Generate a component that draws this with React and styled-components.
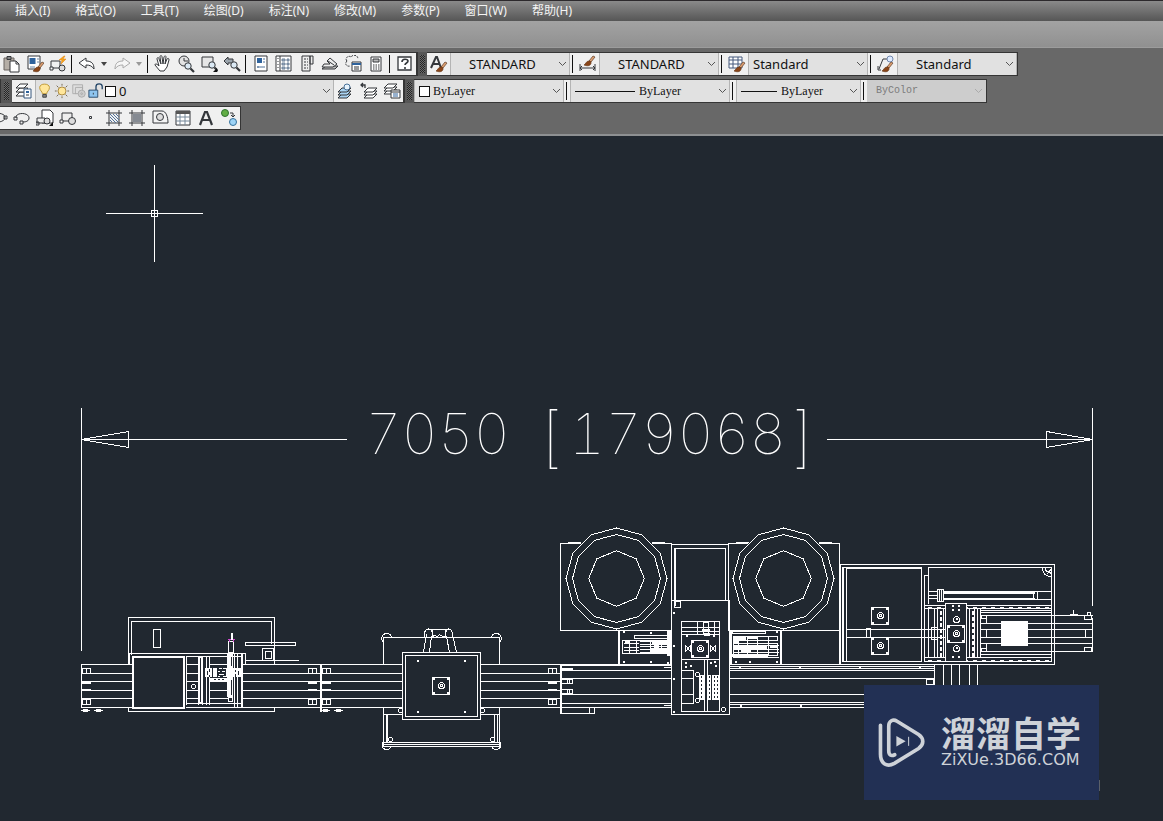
import React from 'react';
import styled, { createGlobalStyle } from 'styled-components';

const Global = createGlobalStyle`
  *, *::before, *::after { box-sizing: border-box; }
  body { margin: 0; background: #212830; }
  button, select { font: inherit; color: inherit; margin: 0; padding: 0; border: 0; background: none; }
`;

const sans = '"Noto Sans", "Noto Sans CJK SC", sans-serif';
const serif = '"Liberation Serif", "Noto Sans CJK SC", serif';
const mono = '"Liberation Mono", "Noto Sans CJK SC", monospace';

const Window = styled.div`
  display: flex;
  flex-direction: column;
  min-height: 100vh;
  font-family: ${sans};
  overflow: hidden;
`;

const MenuBar = styled.nav`
  display: flex;
  gap: 1px;
  height: 21px;
  padding-left: 3px;
  border-top: 1px solid #2c292c;
  background: linear-gradient(#8a8a8a, #565656);
`;

const MenuItem = styled.button`
  padding: 0 12px;
  font-size: 12px;
  line-height: 20px;
  color: #f4f4f4;
  white-space: nowrap;
`;

const Ribbon = styled.div`
  height: 27px;
  background: linear-gradient(#a3a3a3, #909090);
  border-bottom: 1px solid #9c9c9c;
`;

const Dock = styled.div`
  display: flex;
  flex-direction: column;
  align-items: flex-start;
  gap: 3px;
  padding: 4px 0;
  background: #686868;
  border-bottom: 2px solid #8e9092;
`;

const DockRow = styled.div`
  display: flex;
`;

const Toolbar = styled.div`
  display: flex;
  height: 24px;
  margin-left: ${(p) => (p.$scrolled ? '-13px' : '0')};
  background: #f0f0f0;
  border: solid #353535;
  border-width: 1px 1px 1px 0;
`;

const Grip = styled.span`
  flex: none;
  width: ${(p) => (p.$wide ? '12px' : '10px')};
  padding: 3px 2px;
  background: #575757;
  border-left: 1px solid #353535;
  &::before {
    content: '';
    display: block;
    width: 5px;
    height: 100%;
    margin: 0 auto;
    background: repeating-conic-gradient(#262626 0 25%, #6c6c6c 0 50%) 0 0 / 2px 2px;
  }
`;

const Tool = styled.button`
  flex: none;
  display: grid;
  place-items: center;
  width: ${(p) => (p.$narrow ? '12px' : '23px')};
  height: 22px;
`;

const Separator = styled.span`
  flex: none;
  width: 6px;
  padding: 2px;
  &::before {
    content: '';
    display: block;
    width: 1px;
    height: 18px;
    background: #111;
  }
`;

const Combo = styled.label`
  position: relative;
  flex: none;
  display: flex;
  align-items: center;
  gap: 1px;
  width: ${(p) => p.$width}px;
  height: 22px;
  padding-left: ${(p) => p.$indent}px;
  background: ${(p) => (p.$off ? '#cdcdcd' : '#e1e1e1')};
  border: solid ${(p) => (p.$off ? '#cdcdcd' : '#b4b4b4')};
  border-width: 0 1px;
  color: ${(p) => (p.$off ? '#7c7c7c' : '#111')};
`;

const Choice = styled.select`
  flex: 1;
  min-width: 0;
  height: 22px;
  appearance: none;
  opacity: 1;
  font-family: ${(p) => p.$face};
  font-size: ${(p) => p.$size}px;
  line-height: 22px;
`;

const Chevron = styled.svg`
  position: absolute;
  right: 2px;
  top: 8px;
  pointer-events: none;
`;

const Swatch = styled.span`
  flex: none;
  width: 11px;
  height: 11px;
  margin-right: 2px;
  background: #fff;
  border: 1px solid #111;
`;

const LineSample = styled.span`
  flex: none;
  width: ${(p) => p.$length}px;
  height: 1px;
  margin-right: 3px;
  background: #111;
`;

const Canvas = styled.main`
  position: relative;
  flex: 1;
  background: #212830;
`;

const Drawing = styled.svg`
  display: block;
  width: 100%;
  height: auto;
`;

const Badge = styled.aside`
  position: absolute;
  right: 64px;
  bottom: 21px;
  display: flex;
  align-items: center;
  gap: 14px;
  width: 235px;
  height: 115px;
  padding-left: 13px;
  background: #223054;
  color: #ced2d8;
`;

const BadgeText = styled.div`
  display: flex;
  flex-direction: column;
  gap: 1px;
  white-space: nowrap;
`;

const BadgeName = styled.strong`
  font: 700 35px/34px "Noto Sans CJK SC", sans-serif;
`;

const BadgeSite = styled.span`
  font: 400 16px/20px "DejaVu Sans", sans-serif;
`;

const ink = '#34373b';
const Brush = ({ x = 0, y = 0 }) => (
  <g transform={`translate(${x} ${y})`}>
    <path d="M9 0 5 5 7 6 11 1z" fill="#e0a070" stroke="#6b4a35" strokeWidth=".8" />
    <path d="M0 9C2 8 2 5 5 5c2 0 3 2 1 4-1 1-4 1-6 0z" fill="#8a4519" stroke="#5f300f" strokeWidth=".6" />
  </g>
);
const Sheets = ({ x = 0, y = 0, fill = '#fff' }) => (
  <g transform={`translate(${x} ${y})`} fill={fill}>
    <path d="M4 7h9l-4 4H0z" /><path d="M4 4h9L9 8H0z" /><path d="M4 1h9L9 5H0z" />
  </g>
);
const Lens = ({ x, y }) => (
  <><circle cx={x} cy={y} r="3.2" fill="#dbe9f4" /><path d={`M${x + 2.5} ${y + 2.5}l3.5 3.5`} strokeWidth="2.2" /></>
);

const glyphs = {
  paste: <><path d="M1 3h10v12H1z" fill="#b5aea6" stroke="#6b6560" /><path d="M4 1.500h4v3H4z" fill="#888" /><path d="M7 6h6l3 3v8H7z" fill="#fff" /><path d="M13 6v3h3" /></>,
  match: <><path d="M2 1h12v13H2z" fill="#fff" /><path d="M3.500 3h6v6h-6z" fill="#2f639d" stroke="none" /><path d="M11 4h2M11 7h2M4 12h5" stroke="#6c88a8" /><Brush x={7} y={7} /></>,
  block: <><path d="M2 6h9v7H2z" /><path d="M1 12h3v3H1z" fill="#fff" /><circle cx="13" cy="13" r="3" fill="#ddd" /><path d="M15 1l-5 4 3 0-1 4 5-5h-3l2-3z" fill="#f7a51c" stroke="#dd7d08" strokeWidth=".5" /></>,
  undo: <path d="M1 8l7-5v3c6 0 8 3 8 8-2-3-4-4-8-4v3z" fill="#fff" />,
  redo: <path d="M17 8l-7-5v3c-6 0-8 3-8 8 2-3 4-4 8-4v3z" fill="#f6f6f6" stroke="#aaa" />,
  hand: <path d="M6 16L1 10c0-2 2-1 4 1L3 4c0-2 2-2 2 0l2 5-1-7c0-2 2-2 2 0l1 7 1-7c1-2 2-1 2 0l-1 7 2-5c1-1 2-1 2 1l-2 7-3 4z" fill="#fff" />,
  zoomLive: <><circle cx="7" cy="6" r="5" fill="#e3e3e3" /><path d="M7 3v3h4" /><Lens x={11} y={11} /></>,
  zoomWindow: <><path d="M2 2h11v10H2z" fill="#e6e6e6" /><Lens x={12} y={10} /><path d="M17 13v4h-4z" fill="#111" stroke="none" /></>,
  zoomBack: <><path d="M1 6l4-4v2h5v4H5v2z" fill="#9aa3ab" /><Lens x={11} y={10} /></>,
  properties: <><path d="M3 1h12v15H3z" fill="#fff" /><path d="M5 3h5v5H5z" fill="#2f639d" stroke="none" /><path d="M11 4h2M11 7h2M5 12h8M6 11v2" stroke="#51729a" /></>,
  center: <><path d="M1 1h15v15H1zM5 1v15" fill="#fff" /><path d="M3 3v12" strokeDasharray="1 2" /><path d="M7 4h3v2H7zM12 4h2v2h-2zM7 8h3v2H7zM12 8h2v2h-2zM7 12h3v2H7zM12 12h2v2h-2z" fill="#9fb2c7" stroke="#6d8097" /></>,
  palette: <><path d="M4 1h8v15H4zM12 1h3v8h-3z" fill="#eee" /><path d="M6 4h4M6 7h4M6 10h4M6 13h4" strokeDasharray="2 1" /></>,
  sheetset: <><path d="M1 14h13l3-3H5z" fill="#bbb" /><path d="M1 12h11l4-3-7-6-3 3 3 3H3z" fill="#eee" /><path d="M7 6l6 4" /></>,
  markup: <><path d="M3 6c-3-3 2-6 4-4 2-3 7-2 7 2M3 6c-3 3 0 6 3 5" strokeDasharray="2 1" /><path d="M8 7h9v9H8z" fill="#fff" /><path d="M8 9h9" stroke="#2f639d" strokeWidth="2" /><path d="M10 12h5M10 14h5" /></>,
  calculator: <><path d="M4 2h10v14H4z" fill="#fff" /><path d="M6 4h6v3H6z" fill="#bbb" /><path d="M6 10h7M6 12h7M6 14h7" strokeDasharray="1.500 1" /></>,
  help: <><path d="M2 2h13v13H2z" fill="#fff" strokeWidth="1.300" /><path d="M6 7c0-4 6-3 6-1 0 2-3 2-3 4M9 12v2" strokeWidth="1.600" /></>,
  caret: <path d="M6 7h6l-3 4z" fill="#444" stroke="none" />,
  caretOff: <path d="M6 7h6l-3 4z" fill="#999" stroke="none" />,
  textStyle: <><path d="M1 13L6 2h1l4 11M3 9h6" strokeWidth="2" /><Brush x={6} y={7} /></>,
  dimStyle: <><path d="M1 9v7M16 9v7M1 13h15M3 11l-2 2 2 2M14 11l2 2-2 2" /><Brush x={5} y={1} /></>,
  tableStyle: <><path d="M1 2h13v11H1zM1 5h13M1 9h13M5 2v11M10 2v11" fill="#fff" stroke="#44597c" /><Brush x={6} y={7} /></>,
  leaderStyle: <><path d="M2 14L6 4h5M1 11v4h3" /><circle cx="13" cy="4" r="3" fill="#ddeaff" stroke="#7187ad" /><Brush x={5} y={7} /></>,
  layers: <><g fill="#fff"><path d="M5 10h8l-4 4H1z" /><path d="M5 6h8l-4 4H1z" /><path d="M5 2h8L9 6H1z" /></g><path d="M9 7h7v9H9z" fill="#fff" stroke="#36567c" /><path d="M11 9h3v2h-3z" fill="#2f639d" stroke="none" /><path d="M11 13h3" /></>,
  bulb: <><path d="M6 12c0-3-3-3-3-7 0-5 11-5 11 0 0 4-3 4-3 7z" fill="#ffe69a" stroke="#b8912f" /><path d="M6.500 13h4v3h-4z" fill="#888" /></>,
  sun: <><circle cx="9" cy="9" r="4.500" fill="#ffe69a" stroke="#a58236" /><path d="M9 1v2M9 15v2M1 9h2M15 9h2M3 3l2 2M13 13l2 2M3 15l2-2M13 5l2-2" stroke="#6b5d43" /></>,
  freeze: <g stroke="#aaa"><path d="M2 2h11v5M2 2v10h4M5 5h8v7H5z" fill="#ddd" /><circle cx="12" cy="12" r="4" fill="#ccc" /><circle cx="12" cy="12" r="1" /></g>,
  lock: <><path d="M1 8h10v8H1z" fill="#8fc5ef" stroke="#246" /><path d="M9 8V4c0-4 7-4 7 0v3" stroke="#246" strokeWidth="1.500" /><path d="M6 11v2" /></>,
  layerCurrent: <><Sheets x={1} y={5} fill="#a9d3f3" /><circle cx="10" cy="5" r="3" fill="#e7f3fc" stroke="#487199" /></>,
  layerPrevious: <><Sheets x={4} y={5} /><path d="M1 3h4v3M3 1L1 3l2 2" strokeWidth="1.300" /></>,
  layerStates: <><Sheets x={1} y={1} /><path d="M8 8h9v8H8zM8 10h9" fill="#fff" /><path d="M10 12h5M10 14h5" stroke="#2f639d" /></>,
  ellipse: <path d="M3 5c5-2 13 0 12 4s-8 5-12 3M14 7h3v3h-3z" />,
  arc: <><path d="M3 9c-1-6 13-6 13 0 0 3-3 4-6 4M1 8h3v3H1zM7 12h3v3H7z" /></>,
  insert: <><path d="M6 1h8l3 3v10H6z" fill="#fff" /><path d="M1 9h8v5H1zM0 13h3v3H0z" fill="#eee" /><circle cx="11" cy="12" r="3" fill="#ddd" /><path d="M17 13v4h-4z" fill="#111" stroke="none" /></>,
  makeBlock: <><path d="M3 4h10v8H3z" fill="#eee" /><path d="M1 11h3v3H1z" fill="#fff" /><circle cx="13" cy="12" r="3.500" fill="#ddd" /></>,
  point: <path d="M7.500 7.500h2v2h-2z" />,
  hatch: <><path d="M4 1v16M14 1v16M1 4h16M1 14h16" /><path d="M5 5l8 8M5 8l6 6M8 5l6 6M5 11l2 2M11 5l3 3" stroke="#51729a" /></>,
  gradient: <><path d="M5 5h8v8H5z" fill="#858a92" stroke="none" /><path d="M4 1v16M14 1v16M1 4h16M1 14h16" /></>,
  region: <><path d="M2 2h9c4 0 6 6 6 12H2z" fill="#f4f4f4" /><circle cx="9" cy="8" r="3.500" fill="#ddd" /></>,
  table: <><path d="M2 2h14v14H2z" fill="#fff" /><path d="M2 3.500h14" stroke="#555" strokeWidth="3" /><path d="M2 8h14M2 12h14M6 5v11M11 5v11" stroke="#789" /></>,
  mtext: <path d="M3 16L8 3h2l5 13M5 11h8" strokeWidth="2.200" />,
  convert: <><circle cx="5" cy="4" r="3.500" fill="#62ad44" stroke="#2f712e" /><circle cx="13" cy="13" r="3.500" fill="#9dd3f6" stroke="#35719b" /><path d="M10 4h3v3M11 6l2 2 2-2" /></>,
};

const Glyph = ({ name, size = 18 }) => (
  <svg width={size} height={size} viewBox="0 0 18 18" fill="none" stroke={ink} strokeWidth="1" aria-hidden="true">{glyphs[name]}</svg>
);

const NarrowGlyph = ({ name }) => (
  <svg width="12" height="18" viewBox="3 0 12 18" aria-hidden="true">{glyphs[name]}</svg>
);

const ToolButton = ({ name, label, narrow }) => (
  <Tool type="button" aria-label={label || name} $narrow={narrow}>
    {narrow ? <NarrowGlyph name={name} /> : <Glyph name={name} />}
  </Tool>
);

const Picker = ({ label, value, width, indent, face = sans, size = 13, off, children }) => (
  <Combo $width={width} $indent={indent} $off={off}>
    {children}
    <Choice aria-label={label} $face={face} $size={size} disabled={off} defaultValue={value}>
      <option>{value}</option>
    </Choice>
    <Chevron width="9" height="6" viewBox="0 0 9 6" fill="none" stroke={off ? '#aaa' : '#555'}>
      <path d="M1 1l3.500 3.500L8 1" />
    </Chevron>
  </Combo>
);

const menus = ['插入(I)', '格式(O)', '工具(T)', '绘图(D)', '标注(N)', '修改(M)', '参数(P)', '窗口(W)', '帮助(H)'];

const standardTools = [
  'paste', 'match', 'block', '|', 'undo', 'caret', 'redo', 'caretOff', '|',
  'hand', 'zoomLive', 'zoomWindow', 'zoomBack', '|',
  'properties', 'center', 'palette', 'sheetset', 'markup', 'calculator', '|', 'help',
];
const drawTools = ['ellipse', 'arc', 'insert', 'makeBlock', 'point', 'hatch', 'gradient', 'region', 'table', 'mtext', 'convert'];
const styleTools = [
  { icon: 'textStyle', value: 'STANDARD', label: 'Text style', indent: 18 },
  { icon: 'dimStyle', value: 'STANDARD', label: 'Dimension style', indent: 18 },
  { icon: 'tableStyle', value: 'Standard', label: 'Table style', indent: 4 },
  { icon: 'leaderStyle', value: 'Standard', label: 'Multileader style', indent: 18 },
];

/* Geometry helpers for the plan view, in drawing units */
const box = (x1, y1, x2, y2) => `M${x1} ${y1}H${x2}V${y2}H${x1}Z`;
const boxes = (list) => list.map((b) => box(...b)).join('');
const rows = (x1, x2, ys) => ys.map((y) => `M${x1} ${y}H${x2}`).join('');
const cols = (y1, y2, xs) => xs.map((x) => `M${x} ${y1}V${y2}`).join('');
const dots = (list) => list.map(([x, y]) => `M${x} ${y}h1M${x} ${y + 1}h1`).join('');
const polygon = (cx, cy, r, n) =>
  Array.from({ length: n }, (_, i) => {
    const a = (i * 2 * Math.PI) / n;
    return `${(cx + r * Math.sin(a)).toFixed(1)},${(cy - r * Math.cos(a)).toFixed(1)}`;
  }).join(' ');

const Solid = ({ d }) => <path d={d} fill="#fff" stroke="none" transform="translate(-.5 -.5)" />;

const Reel = ({ cx }) => (
  <>
    <polygon points={polygon(cx, 578, 50.5, 12)} />
    <polygon points={polygon(cx, 578, 44, 12)} />
    <polygon points={polygon(cx, 578, 27.8, 8)} />
  </>
);

const Motor = ({ cx, cy }) => (
  <>
    <path d={box(cx - 9, cy - 8, cx + 8, cy + 9)} />
    <path d={dots([[cx - 8, cy - 7], [cx + 6, cy - 7], [cx - 8, cy + 7], [cx + 6, cy + 7]])} />
    <circle cx={cx} cy={cy} r="3" />
    <circle cx={cx} cy={cy} r="1" />
  </>
);

const Foot = ({ x }) => <path d={`M${x} 710h8M${x + 2} 709h4M${x + 2} 711h4`} />;

const Fittings = ({ x }) => (
  <path d={boxes([[x, 668, x + 8, 673], [x, 699, x + 8, 704]]) + cols(668, 673, [x + 4]) + cols(699, 704, [x + 4]) + rows(x, x + 8, [682, 683, 689])} />
);

const railYs = [664, 673, 681, 690, 698, 707];

const Dimension = () => (
  <>
    <path d="M81 408V650M1092 408V605M81 439H346M827 439H1092M81 439L128 431V447ZM1092 439L1046 431V447Z" />
    <g fill="#fff" stroke="none" fontFamily="Inter, sans-serif" fontWeight="100" fontSize="56" style={{ fontVariantNumeric: 'tabular-nums' }}>
      <text x="365" y="453">7050</text>
      <text x="536" y="459">
        <tspan fontSize="66">[</tspan><tspan dx="7" dy="-6">179068</tspan><tspan fontSize="66" dx="6" dy="6">]</tspan>
      </text>
    </g>
  </>
);

const InfeedStation = () => (
  <>
    <path d="M128 664V617H274V664M131 654V621H271V643M128 708V711H274V708" />
    <path d={boxes([[153, 629, 160, 647], [245, 642, 295, 645], [262, 648, 273, 660], [265, 651, 271, 658], [228, 641, 233, 652]])} />
    <path d="M129 653H245V664M129 653V664M245 660H298" />
    <path d={rows(81, 131, railYs) + cols(664, 707, [81])} />
    <Fittings x={82} />
    <Foot x={81} /><Foot x={94} />
    <path d={boxes([[132, 656, 184, 708], [133, 657, 183, 707]])} />
    <path d={rows(186, 242, [656, 703, 707]) + rows(186, 198, [664, 673, 681, 690, 698]) + rows(209, 227, [656, 664, 681, 690, 698])} />
    <path d={cols(656, 704, [186, 198, 202, 206, 209]) + cols(653, 707, [234, 237, 241, 242])} />
    <Solid d="M198 656h5v47h-5zM227 653h6v44h-6zM205 668h7v9h-7zM213 668h4v9h-4zM226 668h15v9h-15zM210 678h19v3h-19z" />
    <path d="M219 668h2M223 668h2M218 671h1M222 671h2M219 674h4M218 676h1M223 676h2" />
    <path d="M200 658V701M207 671v3M209 669v2M209 675v1M235 670v1M235 674v2M238 671v3M231 657V665M231 680V694M214 679h1M218 679h1M222 679h1" stroke="#212830" />
    <circle cx="193" cy="686" r="2" />
    <path d={box(228, 697, 232, 701)} />
    <path d="M231 633V638" strokeWidth="2" />
    <path d="M228 639H230M233 639H234M229 641V640M233 641V640" stroke="#d04bd0" />
    <path d={rows(243, 402, railYs) + cols(664, 711, [320, 321])} />
    <Fittings x={308} /><Fittings x={322} />
    <Foot x={321} /><Foot x={334} />
  </>
);

const Turntable = () => (
  <>
    <path d="M383 664V637H499V664M383 707V746H499V707M383 714H402M481 714H499" />
    <path d={boxes([[402, 652, 480, 719], [405, 655, 477, 716]])} />
    <path d="M423 652L426 634M429 652L431 636M449 652L446 636M456 652L452 634M427 629H450M432 636L434 635 437 636 439 634 442 636H445M432 630V635M445 630V635" />
    <path d="M424 636V632Q425 629 428 628 431 629 432 632M452 636V632Q451 629 448 628 446 629 445 632" />
    <path d="M382 641Q380 637 383 634 388 631 391 636M500 641Q502 637 499 634 494 631 491 636" />
    <path d={dots([[417, 660], [464, 660], [417, 711], [464, 711]])} />
    <Motor cx={441} cy={685} />
    <path d={cols(714, 742, [386, 387, 494, 497]) + rows(384, 498, [742, 744])} />
    <path d="M383 741Q380 744 383 748 388 751 391 746M499 741Q502 744 499 748 494 751 491 746" />
    <circle cx="390" cy="739" r="2" /><circle cx="492" cy="739" r="2" />
    <circle cx="400" cy="710" r="2" /><circle cx="482" cy="710" r="2" />
    <path d={rows(481, 560, railYs)} />
    <Fittings x={548} />
  </>
);

const ReelStation = () => (
  <>
    <path d="M560 630V543H580M652 543H671V630H560M728 630V543H747M819 543H839V664M728 630H839M568 542h12M652 542h12M736 542h12M819 542h12M671 544H728M675 605V548H725V600M674 548V605" />
    <Reel cx={616} /><Reel cx={783} />
    <path d={boxes([[671, 600, 729, 714], [674, 601, 680, 607], [681, 621, 719, 711], [703, 622, 708, 634]])} />
    <path d={rows(681, 719, [627, 631, 634, 659]) + cols(621, 634, [697, 714])} />
    <path d={dots([[673, 612], [673, 645], [673, 678], [673, 711], [686, 635], [713, 635], [685, 662], [690, 665], [710, 662], [715, 665], [685, 666], [714, 661]])} />
    <path d={cols(659, 711, [704, 707]) + cols(670, 703, [693]) + rows(681, 693, [670, 678, 694, 703])} />
    <Solid d="M699 675h6v25h-6zM708 675h3v25h-3zM712 675h8v25h-8zM702 629h8v3h-8zM704 633h6v3h-6z" />
    <path d="M709 676V700M714 676V700M717 676V700M701 676V700" stroke="#212830" strokeDasharray="1 3" />
    <Motor cx={700} cy={648} />
    <path d="M685 645L690 651V645L685 651ZM710 645L715 651V645L710 651Z" />
    <circle cx="697" cy="674" r="2" /><circle cx="697" cy="700" r="2" /><circle cx="723" cy="709" r="2" />

    <path d={cols(630, 664, [618, 619, 670]) + boxes([[634, 635, 668, 638], [622, 640, 670, 653]])} />
    <path d={rows(640, 671, [641, 644, 646, 649, 652]) + rows(624, 638, [643, 647, 650]) + cols(640, 653, [629, 636, 650, 655, 661])} />
    <Solid d="M667 631h3v25h-3zM652 641h18v4h-18zM650 648h20v5h-20zM625 641h4v3h-4zM654 645h5v3h-5z" />
    <path d={dots([[623, 631], [623, 661], [650, 632], [650, 661], [667, 662]])} />

    <path d={cols(630, 664, [730, 731, 780, 781]) + boxes([[732, 631, 765, 633], [733, 636, 777, 640], [733, 643, 777, 655]])} />
    <path d={rows(733, 778, [645, 649, 652, 657]) + cols(636, 655, [738, 747, 757, 768])} />
    <Solid d="M733 637h13v3h-13zM748 637h10v2h-10zM734 646h33v3h-33zM732 654h36v3h-36zM770 645h8v3h-8zM733 641h6v3h-6zM741 650h10v3h-10z" />
    <path d={dots([[776, 631], [776, 661], [749, 661], [735, 661]])} />

    <path d={rows(561, 671, [664, 665, 670, 678, 694, 703, 707]) + rows(729, 934, [664, 666, 668, 670, 678]) + rows(729, 864, [694, 702, 704, 707])} />
    <path d={cols(664, 713, [560, 561]) + rows(664, 671, [667, 705]) + box(561, 707, 594, 713)} />
    <path d={rows(562, 572, [668, 669, 679, 683, 689, 693, 703]) + cols(679, 683, [567, 569, 572]) + cols(689, 693, [567, 569, 572]) + cols(707, 713, [589])} />
    <path d={dots([[739, 666], [799, 666], [740, 705], [800, 705], [859, 666], [919, 666]])} />
  </>
);

const OutfeedCell = () => (
  <>
    <path d={boxes([[840, 564, 1054, 664], [842, 567, 921, 661]])} />
    <path d="M843 567V661M846 568V661M846 568H921M830 630H840M928 603V567H1051V661H924V575H928" />
    <Motor cx={880} cy={615} /><Motor cx={880} cy={645} />
    <path d={rows(846, 946, [629, 637])} />
    <path d={boxes([[866, 628, 870, 637], [931, 627, 937, 639], [937, 589, 943, 601]])} />
    <path d={rows(943, 1034, [591, 592, 593, 598, 599]) + rows(1034, 1051, [591, 599]) + cols(591, 599, [1033, 1037]) + rows(928, 937, [591, 595, 598]) + cols(589, 601, [939, 941])} />
    <path d={rows(925, 1051, [605, 608, 657]) + rows(980, 1051, [610, 612, 654]) + rows(980, 1092, [615, 623, 629, 637, 643, 651])} />
    <path d="M928 607H1051M928 660H1051" strokeDasharray="2 7" strokeWidth="2" />
    <path d={cols(608, 657, [928, 934, 977, 980]) + cols(615, 622, [986]) + cols(629, 637, [986, 1085]) + cols(643, 651, [986])} />
    <path d={boxes([[981, 615, 986, 618], [981, 648, 986, 651], [1084, 615, 1091, 619], [1084, 647, 1091, 651]])} />
    <Solid d="M1001 621h27v25h-27z" />
    <path d="M1092 618V651M1070 614H1077M1073 610V614M1087 615V612H1090V615M1042 567Q1042 576 1051 576M1045 567V570L1051 573M1047 573L1051 568" />
    <path d={cols(609, 656, [937, 943, 969, 974])} />
    <path d="M940 611V656M972 611V656" strokeWidth="2" strokeDasharray="2 4" />
    <path d={box(945, 603, 966, 661)} fill="#212830" />
    <Motor cx={956} cy={633} />
    <circle cx="956" cy="619" r="3" /><circle cx="956" cy="648" r="3" />
    <path d={dots([[952, 605], [958, 605], [952, 609], [958, 609], [952, 656], [958, 656], [956, 618], [956, 647]])} />
    <path d={cols(664, 686, [934, 943, 951, 959, 969, 977]) + box(926, 679, 933, 684)} />
  </>
);

const Plan = () => (
  <Drawing viewBox="0 136 1163 684" role="img" aria-label="Production line plan view">
    <g transform="translate(.5 .5)" fill="none" stroke="#fff" strokeWidth="1" strokeLinecap="square" shapeRendering="crispEdges">
      <path d={`M154 165V261M106 213H202${box(151, 210, 157, 216)}`} />
      <Dimension />
      <InfeedStation />
      <Turntable />
      <ReelStation />
      <OutfeedCell />
      <path d="M1099 780V790" stroke="#5b6068" />
    </g>
  </Drawing>
);

const renderTools = (names) =>
  names.map((name, i) =>
    name === '|' ? <Separator key={i} /> : <ToolButton key={i} name={name} narrow={name.startsWith('caret')} />
  );

export default function App() {
  return (
    <Window>
      <Global />
      <MenuBar>
        {menus.map((m) => <MenuItem type="button" key={m}>{m}</MenuItem>)}
      </MenuBar>
      <Ribbon />
      <Dock>
        <DockRow>
          <Toolbar>{renderTools(standardTools)}</Toolbar>
          <Grip />
          <Toolbar>
            {styleTools.map((s, i) => (
              <React.Fragment key={s.label}>
                {i > 0 && <Separator />}
                <ToolButton name={s.icon} label={s.label} />
                <Picker label={s.label} value={s.value} width={120} indent={s.indent} />
              </React.Fragment>
            ))}
          </Toolbar>
        </DockRow>
        <DockRow>
          <Grip $wide />
          <Toolbar>
            <ToolButton name="layers" label="Layer properties" />
            <Picker label="Layer" value="0" width={299} indent={1}>
              <Glyph name="bulb" size={16} />
              <Glyph name="sun" size={16} />
              <Glyph name="freeze" size={16} />
              <Glyph name="lock" size={16} />
              <Swatch />
            </Picker>
            <ToolButton name="layerCurrent" />
            <ToolButton name="layerPrevious" />
            <ToolButton name="layerStates" />
          </Toolbar>
          <Grip />
          <Toolbar>
            <Picker label="Colour" value="ByLayer" width={150} indent={4} face={serif} size={12}>
              <Swatch />
            </Picker>
            <Separator />
            <Picker label="Linetype" value="ByLayer" width={160} indent={4} face={serif} size={12}>
              <LineSample $length={60} />
            </Picker>
            <Separator />
            <Picker label="Lineweight" value="ByLayer" width={125} indent={4} face={serif} size={12}>
              <LineSample $length={36} />
            </Picker>
            <Separator />
            <Picker label="Plot style" value="ByColor" width={119} indent={8} face={mono} size={10} off />
          </Toolbar>
        </DockRow>
        <Toolbar $scrolled>{renderTools(drawTools)}</Toolbar>
      </Dock>
      <Canvas>
        <Plan />
        <Badge>
          <svg width="50" height="53" viewBox="80 140 150 160" fill="none" stroke="#ced2d8" strokeWidth="11" strokeLinecap="round" aria-hidden="true">
            <path d="M90 168V255C90 285 110 295 132 283L205 238C222 226 222 208 205 196L140 156C128 148 115 155 115 170V245C115 258 122 262 133 257" />
            <path d="M138 200V232L166 216Z" fill="#ced2d8" stroke="none" />
            <path d="M175 204V229" strokeWidth="3" />
          </svg>
          <BadgeText>
            <BadgeName>溜溜自学</BadgeName>
            <BadgeSite>ZiXUe.3D66.COM</BadgeSite>
          </BadgeText>
        </Badge>
      </Canvas>
    </Window>
  );
}
